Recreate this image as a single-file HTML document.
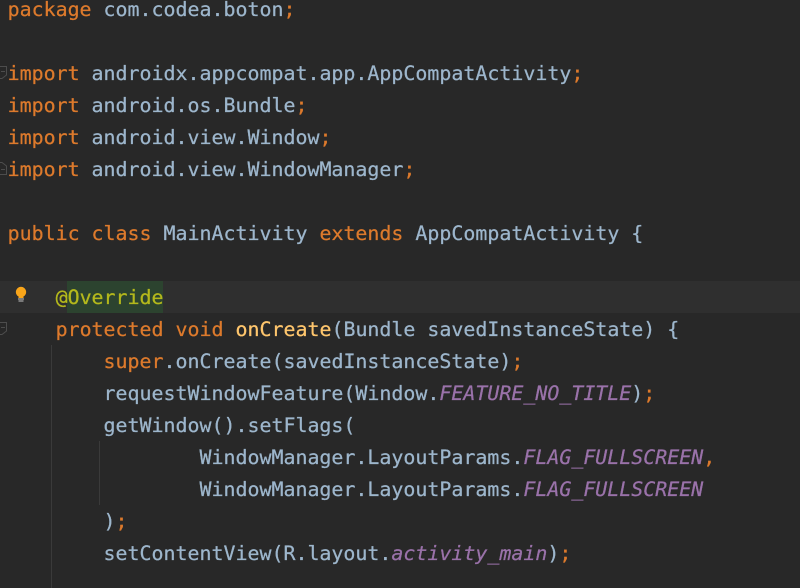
<!DOCTYPE html>
<html><head><meta charset="utf-8">
<style>
html,body{margin:0;padding:0;background:#282828;}
#w{position:relative;width:800px;height:588px;overflow:hidden;background:#282828;}
.l{position:absolute;left:7.6px;white-space:pre;font-family:"DejaVu Sans Mono","Liberation Mono",monospace;font-size:19.93px;line-height:32px;height:32px;color:#9db6cc;-webkit-text-stroke:0.25px currentColor;}
.k{color:#dd7a2c}
.n{color:#ffc66d}
.a{color:#b4b81c}
.c{color:#9a72aa;font-style:italic}
.hl{position:absolute;left:0;top:281px;width:800px;height:32px;background:#2f2f2f}
.mk{position:absolute;left:67px;top:281px;width:96px;height:32px;background:#2c432f}
.g{position:absolute;width:1px;background:#3a3a3a}
svg{position:absolute}
</style></head><body><div id="w">
<div class="hl"></div><div class="mk"></div>
<div class="g" style="left:51px;top:345px;height:243px"></div>
<div class="g" style="left:99px;top:441px;height:64px"></div>
<svg style="left:0;top:65px" width="7" height="16" viewBox="0 0 7 16" fill="none" stroke="#4d4d4d"><path d="M-1 1.5H6.5V10L2 13.5H-1M1 6.5H5"/></svg>
<svg style="left:0;top:160px" width="7" height="16" viewBox="0 0 7 16" fill="none" stroke="#4d4d4d"><path d="M-1 14.5H6.5V6L2 2.5H-1M1 9.5H5"/></svg>
<svg style="left:0;top:321px" width="7" height="16" viewBox="0 0 7 16" fill="none" stroke="#4d4d4d"><path d="M-1 1.5H6.5V10L2 13.5H-1M1 6.5H5"/></svg>
<svg style="left:14px;top:286px" width="14" height="18" viewBox="0 0 14 18"><circle cx="7" cy="6" r="5.2" fill="#f9a51a"/><rect x="4.5" y="9" width="5" height="3" fill="#f9a51a"/><rect x="4" y="12.5" width="6" height="1" fill="#c4c4c4"/><rect x="4.5" y="14.5" width="5" height="1" fill="#c4c4c4"/></svg>
<div class="l" style="top:-6px"><span class="k">package</span> com.codea.boton<span class="k">;</span></div>
<div class="l" style="top:58px"><span class="k">import</span> androidx.appcompat.app.AppCompatActivity<span class="k">;</span></div>
<div class="l" style="top:90px"><span class="k">import</span> android.os.Bundle<span class="k">;</span></div>
<div class="l" style="top:122px"><span class="k">import</span> android.view.Window<span class="k">;</span></div>
<div class="l" style="top:154px"><span class="k">import</span> android.view.WindowManager<span class="k">;</span></div>
<div class="l" style="top:218px"><span class="k">public class</span> MainActivity <span class="k">extends</span> AppCompatActivity {</div>
<div class="l" style="top:282px">    <span class="a">@Override</span></div>
<div class="l" style="top:314px">    <span class="k">protected void</span> <span class="n">onCreate</span>(Bundle savedInstanceState) {</div>
<div class="l" style="top:346px">        <span class="k">super</span>.onCreate(savedInstanceState)<span class="k">;</span></div>
<div class="l" style="top:378px">        requestWindowFeature(Window.<span class="c">FEATURE_NO_TITLE</span>)<span class="k">;</span></div>
<div class="l" style="top:410px">        getWindow().setFlags(</div>
<div class="l" style="top:442px">                WindowManager.LayoutParams.<span class="c">FLAG_FULLSCREEN</span><span class="k">,</span></div>
<div class="l" style="top:474px">                WindowManager.LayoutParams.<span class="c">FLAG_FULLSCREEN</span></div>
<div class="l" style="top:506px">        )<span class="k">;</span></div>
<div class="l" style="top:538px">        setContentView(R.layout.<span class="c">activity_main</span>)<span class="k">;</span></div>
</div></body></html>
